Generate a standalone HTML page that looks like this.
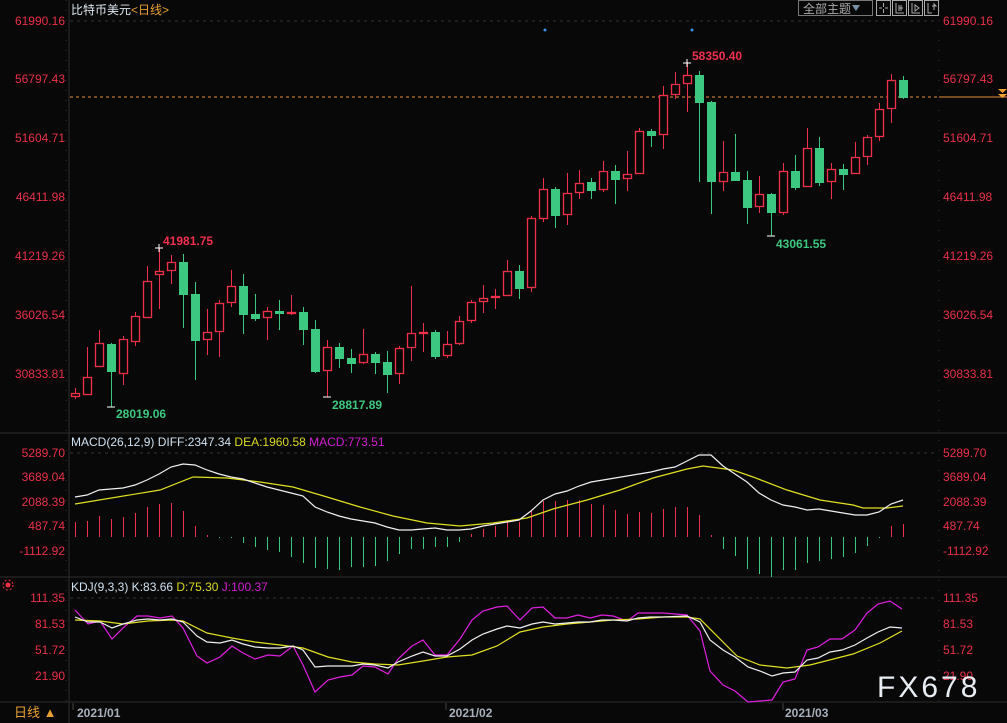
<!DOCTYPE html>
<html><head><meta charset="utf-8"><style>
body{margin:0;background:#080808;width:1007px;height:723px;overflow:hidden;font-family:"Liberation Sans","Noto Sans CJK SC",sans-serif}
svg{position:absolute;left:0;top:0}
text{font-family:"Liberation Sans","Noto Sans CJK SC",sans-serif}
</style></head><body>
<svg id="s" width="1007" height="723" xmlns="http://www.w3.org/2000/svg">
<rect width="1007" height="723" fill="#080808"/>
<!-- frame lines -->
<line x1="69" y1="0" x2="69" y2="723" stroke="#2e2e2e"/>
<line x1="0" y1="433" x2="1007" y2="433" stroke="#2e2e2e"/>
<line x1="0" y1="577" x2="1007" y2="577" stroke="#2e2e2e"/>
<line x1="0" y1="702" x2="1007" y2="702" stroke="#2e2e2e"/>
<line x1="939" y1="0" x2="939" y2="702" stroke="#333" stroke-dasharray="1,9"/>
<line x1="66" y1="0" x2="66" y2="702" stroke="#333" stroke-dasharray="1,9"/>
<line x1="70" y1="21" x2="938" y2="21" stroke="#333" stroke-dasharray="3,4"/>
<line x1="70" y1="453" x2="938" y2="453" stroke="#333" stroke-dasharray="3,4"/>
<line x1="70" y1="598" x2="938" y2="598" stroke="#333" stroke-dasharray="3,4"/>
<!-- orange price line -->
<line x1="70" y1="97" x2="938" y2="97" stroke="#e8903a" stroke-dasharray="3,3"/>
<line x1="939" y1="97" x2="1007" y2="97" stroke="#e8903a"/>
<path d="M998 89h9l-4.5 4z M998 94h9l-4.5 4z" fill="#f0a030"/>
<circle cx="545" cy="30" r="1.5" fill="#3a8ee8"/><circle cx="692" cy="30" r="1.5" fill="#3a8ee8"/>
<g id="c"></g>
<g id="m"></g>
<!-- left axis -->
<g fill="#e8304a" font-size="12" text-anchor="end">
<text x="65" y="25">61990.16</text><text x="65" y="83">56797.43</text><text x="65" y="142">51604.71</text><text x="65" y="201">46411.98</text><text x="65" y="260">41219.26</text><text x="65" y="319">36026.54</text><text x="65" y="378">30833.81</text>
<text x="65" y="457">5289.70</text><text x="65" y="481">3689.04</text><text x="65" y="506">2088.39</text><text x="65" y="530">487.74</text><text x="65" y="555">-1112.92</text>
<text x="65" y="602">111.35</text><text x="65" y="628">81.53</text><text x="65" y="654">51.72</text><text x="65" y="680">21.90</text>
</g>
<g fill="#e8304a" font-size="12">
<text x="943" y="25">61990.16</text><text x="943" y="83">56797.43</text><text x="943" y="142">51604.71</text><text x="943" y="201">46411.98</text><text x="943" y="260">41219.26</text><text x="943" y="319">36026.54</text><text x="943" y="378">30833.81</text>
<text x="943" y="457">5289.70</text><text x="943" y="481">3689.04</text><text x="943" y="506">2088.39</text><text x="943" y="530">487.74</text><text x="943" y="555">-1112.92</text>
<text x="943" y="602">111.35</text><text x="943" y="628">81.53</text><text x="943" y="654">51.72</text><text x="943" y="680">21.90</text>
</g>
<!-- titles -->
<text x="71" y="14" font-size="12" fill="#dfe8f0">比特币美元<tspan fill="#e8a030">&lt;日线&gt;</tspan></text>
<text x="71" y="446" font-size="12" fill="#cfe0f0">MACD(26,12,9) DIFF:2347.34 <tspan fill="#d8d820">DEA:1960.58</tspan> <tspan fill="#d020d0">MACD:773.51</tspan></text>
<text x="71" y="591" font-size="12" fill="#cfe0f0">KDJ(9,3,3) K:83.66 <tspan fill="#d8d820">D:75.30</tspan> <tspan fill="#d020d0">J:100.37</tspan></text>
<!-- annotations -->
<g font-size="12" font-weight="bold">
<text x="163" y="245" fill="#f03050">41981.75</text>
<text x="692" y="60" fill="#f03050">58350.40</text>
<text x="116" y="418" fill="#3cc880">28019.06</text>
<text x="332" y="409" fill="#3cc880">28817.89</text>
<text x="776" y="248" fill="#3cc880">43061.55</text>
</g>
<g stroke="#fff" stroke-width="1">
<path d="M155 248h8M159 244v8 M683 63h8M687 59v8 M107 407h8 M323 397h8 M767 236h8"/>
</g>
<!-- bottom -->
<text x="14" y="717" font-size="13" fill="#e8a030">日线 ▲</text>
<g font-size="12" font-weight="bold" fill="#a8b0bc">
<text x="77" y="717">2021/01</text><text x="449" y="717">2021/02</text><text x="785" y="717">2021/03</text>
</g>
<line x1="73" y1="703" x2="73" y2="710" stroke="#444"/><line x1="446" y1="703" x2="446" y2="710" stroke="#444"/><line x1="783" y1="703" x2="783" y2="710" stroke="#444"/>
<text x="877" y="697" font-size="30" fill="#e8edf3" letter-spacing="3">FX678</text>
<!-- icon -->
<circle cx="8" cy="585" r="2.5" fill="#f03040"/><circle cx="8" cy="585" r="5" fill="none" stroke="#f03040" stroke-dasharray="2,2"/>
<!-- top right buttons -->
<rect x="798.5" y="0.5" width="74" height="15" fill="none" stroke="#777"/>
<text x="803" y="13" font-size="12" fill="#aaa">全部主题</text><path d="M852 5h8l-4 6z" fill="#7890a8"/>
<g fill="none" stroke="#aaa">
<rect x="876.5" y="0.5" width="14" height="15"/><rect x="892.5" y="0.5" width="14" height="15"/><rect x="908.5" y="0.5" width="14" height="15"/><rect x="924.5" y="0.5" width="14" height="15"/>
<path d="M883.5 3v4M883.5 9v4M879 8h3M885 8h3 M896 3v10h8M899 5v6M901 5v6M899 8h4 M912 3v10h8M915 5v6l4-3z M928 3v10h4M932 6h4l-2-2v6"/>
</g>
</svg>
<script>
var C=[[393,396,388,399,'r'],[377,394,347,395,'r'],[343,366,330,367,'r'],[344,371,343,407,'g'],[339,373,336,385,'r'],[316,341,312,346,'r'],[281,317,266,317,'r'],[271,274,248,309,'r'],[262,270,255,284,'r'],[262,294,254,328,'g'],[294,340,282,380,'g'],[332,339,309,355,'r'],[303,331,300,357,'r'],[286,302,270,307,'r'],[286,314,274,334,'g'],[314,318,294,321,'g'],[311,317,307,340,'r'],[311,313,300,330,'g'],[312,313,295,315,'r'],[312,329,307,345,'g'],[329,371,320,373,'g'],[347,370,340,397,'r'],[347,358,343,368,'g'],[358,363,349,373,'g'],[354,362,329,364,'r'],[354,362,352,374,'g'],[362,374,351,393,'g'],[348,373,346,384,'r'],[333,347,286,361,'r'],[332,333,323,352,'r'],[332,356,330,359,'g'],[344,355,331,358,'r'],[321,343,316,345,'r'],[302,320,300,323,'r'],[298,301,285,313,'r'],[296,297,289,309,'r'],[271,295,260,296,'r'],[271,288,265,299,'g'],[218,287,216,292,'r'],[189,218,178,222,'r'],[189,215,187,228,'g'],[193,214,173,225,'r'],[183,192,170,199,'r'],[182,190,178,199,'g'],[171,189,161,192,'r'],[171,179,165,204,'g'],[174,178,151,191,'r'],[131,173,128,174,'r'],[131,135,129,147,'g'],[95,134,86,149,'r'],[84,94,72,99,'r'],[75,83,62,112,'r'],[75,102,71,182,'g'],[102,181,101,214,'g'],[172,181,141,191,'r'],[172,180,134,180,'g'],[180,207,171,224,'g'],[194,206,176,213,'r'],[194,212,193,236,'g'],[171,212,163,215,'r'],[171,187,155,190,'g'],[148,186,128,186,'r'],[148,182,137,186,'g'],[169,181,163,199,'r'],[169,174,164,190,'g'],[157,173,142,173,'r'],[137,156,135,165,'r'],[109,136,103,141,'r'],[80,108,74,123,'r'],[80,97,76,99,'g']];
var RED='#f0304a',GR='#3cc880',h='';
C.forEach(function(c,i){var x=75+12*i,col=c[4]=='r'?RED:GR;
h+='<line x1="'+(x+.5)+'" y1="'+c[2]+'" x2="'+(x+.5)+'" y2="'+c[3]+'" stroke="'+col+'"/>';
var bh=Math.max(c[1]-c[0],1);
if(c[4]=='r')h+='<rect x="'+(x-3.5)+'" y="'+(c[0]+.5)+'" width="8" height="'+bh+'" fill="#080808" stroke="'+col+'" stroke-width="1.3"/>';
else h+='<rect x="'+(x-4)+'" y="'+c[0]+'" width="9" height="'+(bh+1)+'" fill="'+col+'"/>';});
document.getElementById('c').innerHTML=h;
var M=[522,521,516,519,517,513,507,504,503,511,526,535,538,538,543,547,550,552,557,563,568,569,570,567,567,566,561,554,549,549,547,547,542,534,529,526,522,522,511,501,501,500,500,504,505,510,514,512,513,509,507,507,515,535,549,556,569,574,577,570,570,563,561,559,557,553,546,537,526,524];
var g='';M.forEach(function(y,i){var x=75+12*i+.5,col=y<537?RED:GR;g+='<line x1="'+x+'" y1="537" x2="'+x+'" y2="'+(y==537?538:y)+'" stroke="'+col+'"/>';});
function pl(p,c){return '<polyline fill="none" stroke="'+c+'" stroke-width="1.2" points="'+p+'"/>';}
var dif=[497,495,490,489,488,485,480,474,467,464,465,470,474,477,479,483,487,490,493,496,507,512,516,519,521,523,527,530,530,529,528,530,530,529,526,524,522,520,511,500,494,491,486,482,480,478,476,474,472,469,467,461,455,455,466,474,482,493,500,505,507,510,509,511,513,515,515,512,504,500];
var dp=dif.map(function(y,i){return (75+12*i)+','+y}).join(' ');
g+=pl('75,504 160,490 193,477 227,478 260,482 293,487 327,497 360,507 393,516 427,523 460,526 493,523 527,518 553,509 587,500 620,490 653,478 687,469 703,466 733,470 753,477 787,490 820,500 853,505 863,508 887,508 903,506','#e0e020');
g+=pl(dp,'#f0f0f0');
g+=pl('75,610 88,624 100,621 112,639 123,628 137,616 148,616 160,618 172,616 183,628 197,656 207,663 220,657 232,646 243,653 255,659 268,655 280,656 293,646 303,665 315,692 328,680 340,677 352,675 363,666 375,667 388,674 398,659 412,646 423,640 435,655 447,655 460,639 472,620 483,611 497,607 507,606 520,620 532,608 543,607 555,618 567,618 578,615 590,618 602,615 613,616 627,621 638,613 650,613 663,613 675,614 687,615 700,631 710,671 723,685 735,691 748,702 760,701 772,700 783,682 795,679 807,650 818,647 830,639 842,639 855,630 867,613 878,604 890,601 902,609','#e020e0');
g+=pl('75,620 100,621 123,624 148,621 172,620 183,621 207,633 232,638 255,642 280,645 303,648 328,657 352,662 375,664 398,665 423,661 447,657 472,655 497,646 520,632 543,627 567,624 590,622 613,620 638,619 663,617 687,617 700,619 737,656 760,665 787,668 810,665 853,654 880,643 902,631','#e0e020');
g+=pl('75,617 88,622 100,622 112,628 123,624 137,620 148,619 160,620 172,619 183,622 197,636 207,642 220,643 232,640 243,644 255,647 268,648 280,648 293,646 303,650 315,667 328,666 340,666 352,666 363,664 375,665 388,668 398,662 412,656 423,652 435,656 447,656 460,649 472,640 483,634 497,629 507,626 520,628 532,624 543,622 555,624 567,623 578,622 590,622 602,620 613,620 627,621 638,618 650,617 663,617 687,616 700,622 710,640 723,650 735,657 748,667 760,671 772,676 783,673 795,672 807,660 818,658 830,652 842,650 855,645 867,638 878,632 890,627 902,628','#f0f0f0');
document.getElementById('m').innerHTML=g;
</script>
</body></html>
